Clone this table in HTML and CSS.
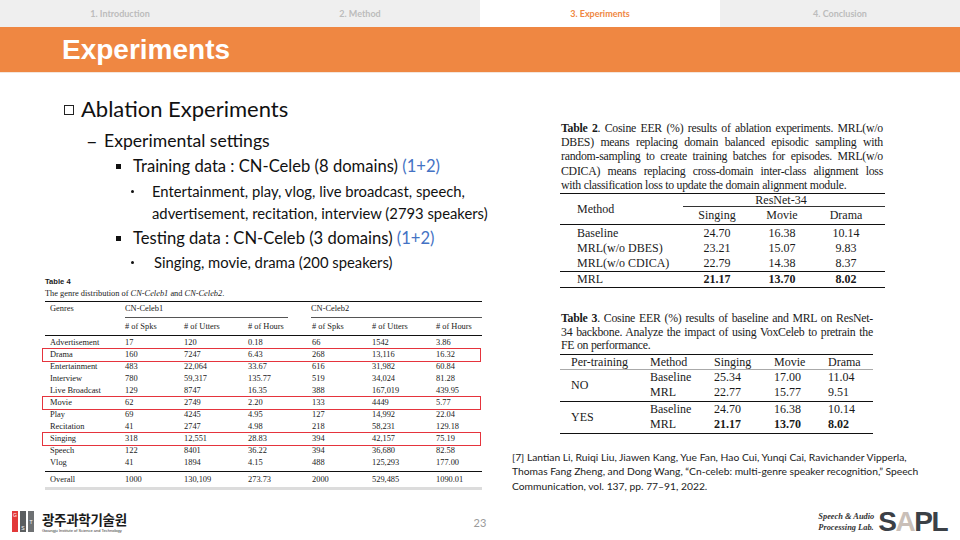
FILE: index.html
```html
<!DOCTYPE html>
<html lang="en">
<head>
<meta charset="utf-8">
<title>Experiments</title>
<link rel="stylesheet" href="styles.css">
</head>
<body>
<div class="slide">
  <nav class="tabs">
    <div class="tab">1. Introduction</div>
    <div class="tab">2. Method</div>
    <div class="tab active">3. Experiments</div>
    <div class="tab">4. Conclusion</div>
  </nav>
  <header class="titlebar"><h1>Experiments</h1></header>
  <main class="content">
    <section class="left">
      <div class="l1"><span class="box"></span>Ablation Experiments</div>
      <div class="l2"><span class="dash">–</span>Experimental settings</div>
      <div class="l3"><span class="sq"></span>Training data : CN-Celeb (8 domains) <span class="blue">&nbsp;(1+2)</span></div>
      <div class="l4"><span class="dot"></span><span>Entertainment, play, vlog, live broadcast, speech,<br>advertisement, recitation, interview (2793 speakers)</span></div>
      <div class="l5"><span class="sq"></span>Testing data : CN-Celeb (3 domains) <span class="blue">&nbsp;(1+2)</span></div>
      <div class="l6"><span class="dot"></span>Singing, movie, drama (200 speakers)</div>

      <div class="t4">
        <div class="t4-title">Table 4</div>
        <div class="t4-cap">The genre distribution of <i>CN-Celeb1</i> and <i>CN-Celeb2</i>.</div>
        <div class="t4-head1">
          <span class="g">Genres</span>
          <span class="grp grp1">CN-Celeb1</span>
          <span class="grp grp2">CN-Celeb2</span>
        </div>
        <div class="row t4-head2">
          <span></span><span># of Spks</span><span># of Utters</span><span># of Hours</span><span># of Spks</span><span># of Utters</span><span># of Hours</span>
        </div>
        <div class="t4-body">
          <div class="row"><span>Advertisement</span><span>17</span><span>120</span><span>0.18</span><span>66</span><span>1542</span><span>3.86</span></div>
          <div class="row mark"><span>Drama</span><span>160</span><span>7247</span><span>6.43</span><span>268</span><span>13,116</span><span>16.32</span></div>
          <div class="row"><span>Entertainment</span><span>483</span><span>22,064</span><span>33.67</span><span>616</span><span>31,982</span><span>60.84</span></div>
          <div class="row"><span>Interview</span><span>780</span><span>59,317</span><span>135.77</span><span>519</span><span>34,024</span><span>81.28</span></div>
          <div class="row"><span>Live Broadcast</span><span>129</span><span>8747</span><span>16.35</span><span>388</span><span>167,019</span><span>439.95</span></div>
          <div class="row mark"><span>Movie</span><span>62</span><span>2749</span><span>2.20</span><span>133</span><span>4449</span><span>5.77</span></div>
          <div class="row"><span>Play</span><span>69</span><span>4245</span><span>4.95</span><span>127</span><span>14,992</span><span>22.04</span></div>
          <div class="row"><span>Recitation</span><span>41</span><span>2747</span><span>4.98</span><span>218</span><span>58,231</span><span>129.18</span></div>
          <div class="row mark"><span>Singing</span><span>318</span><span>12,551</span><span>28.83</span><span>394</span><span>42,157</span><span>75.19</span></div>
          <div class="row"><span>Speech</span><span>122</span><span>8401</span><span>36.22</span><span>394</span><span>36,680</span><span>82.58</span></div>
          <div class="row"><span>Vlog</span><span>41</span><span>1894</span><span>4.15</span><span>488</span><span>125,293</span><span>177.00</span></div>
        </div>
        <div class="row t4-total"><span>Overall</span><span>1000</span><span>130,109</span><span>273.73</span><span>2000</span><span>529,485</span><span>1090.01</span></div>
      </div>
    </section>

    <section class="right">
      <div class="tbl2">
        <div class="cap cap2">
          <div class="jl"><b>Table 2</b>. Cosine EER (%) results of ablation experiments. MRL(w/o</div>
          <div class="jl">DBES) means replacing domain balanced episodic sampling with</div>
          <div class="jl">random-sampling to create training batches for episodes. MRL(w/o</div>
          <div class="jl">CDICA) means replacing cross-domain inter-class alignment loss</div>
          <div>with classification loss to update the domain alignment module.</div>
        </div>
        <table class="t2">
          <colgroup><col class="c1"><col class="c2"><col class="c3"><col class="c4"></colgroup>
          <tr class="h1"><td rowspan="2" class="method">Method</td><td colspan="3" class="rn">ResNet-34</td></tr>
          <tr class="h2"><td>Singing</td><td>Movie</td><td>Drama</td></tr>
          <tr class="r"><td class="name">Baseline</td><td>24.70</td><td>16.38</td><td>10.14</td></tr>
          <tr class="r"><td class="name">MRL(w/o DBES)</td><td>23.21</td><td>15.07</td><td>9.83</td></tr>
          <tr class="r"><td class="name">MRL(w/o CDICA)</td><td>22.79</td><td>14.38</td><td>8.37</td></tr>
          <tr class="r last"><td class="name">MRL</td><td><b>21.17</b></td><td><b>13.70</b></td><td><b>8.02</b></td></tr>
        </table>
      </div>

      <div class="tbl3">
        <div class="cap cap3">
          <div class="jl"><b>Table 3</b>. Cosine EER (%) results of baseline and MRL on ResNet-</div>
          <div class="jl">34 backbone. Analyze the impact of using VoxCeleb to pretrain the</div>
          <div>FE on performance.</div>
        </div>
        <table class="t3">
          <colgroup><col class="d1"><col class="d2"><col class="d3"><col class="d4"><col class="d5"></colgroup>
          <tr class="hd"><td class="pt">Per-training</td><td>Method</td><td>Singing</td><td>Movie</td><td>Drama</td></tr>
          <tr class="r"><td rowspan="2" class="pt grp3">NO</td><td>Baseline</td><td>25.34</td><td>17.00</td><td>11.04</td></tr>
          <tr class="r sep"><td>MRL</td><td>22.77</td><td>15.77</td><td>9.51</td></tr>
          <tr class="r"><td rowspan="2" class="pt">YES</td><td>Baseline</td><td>24.70</td><td>16.38</td><td>10.14</td></tr>
          <tr class="r"><td>MRL</td><td><b>21.17</b></td><td><b>13.70</b></td><td><b>8.02</b></td></tr>
        </table>
      </div>

      <p class="cite">[7] Lantian Li, Ruiqi Liu, Jiawen Kang, Yue Fan, Hao Cui, Yunqi Cai, Ravichander Vipperla,<br>Thomas Fang Zheng, and Dong Wang, “Cn-celeb: multi-genre speaker recognition,” Speech<br>Communication, vol. 137, pp. 77–91, 2022.</p>
    </section>
  </main>
  <footer class="foot">
    <div class="gist">
      <div class="bars">
        <span class="bar b1"><i class="lg">G</i></span>
        <span class="bar b2"><i class="ls">S</i></span>
        <span class="bar b3"><i class="lt">T</i></span>
      </div>
      <div class="gname">
        <div class="ko">광주과학기술원</div>
        <div class="en">Gwangju Institute of Science and Technology</div>
      </div>
    </div>
    <div class="pageno">23</div>
    <div class="sapl">
      <div class="lab"><div>Speech &amp; Audio</div><div>Processing Lab.</div></div>
      <div class="mark-sapl">S<span class="a">A</span>PL</div>
    </div>
  </footer>
</div>
</body>
</html>
```

FILE: styles.css
```css
html, body { margin: 0; padding: 0; }
body { font-family: "Lato", "Open Sans", sans-serif; color: #111; background: #fff; }
.slide { width: 960px; height: 540px; display: flex; flex-direction: column; overflow: hidden; }

.tabs { display: grid; grid-template-columns: repeat(4, 1fr); height: 27px; background: #efefef; flex: none; }
.tab { display: flex; align-items: center; justify-content: center; font: 700 9px "Lato", sans-serif; color: #bcbcbc; }
.tab.active { background: #fff; color: #ef8742; }

.titlebar { flex: none; height: 45px; background: #ef8742; border-bottom: 1px solid #f3e6dc; padding-left: 62px; display: flex; align-items: center; }
.titlebar h1 { margin: 0; font: 700 28px "Liberation Sans", Arial, sans-serif; color: #fff; }

.content { flex: none; height: 430px; display: grid; grid-template-columns: 490px 1fr; }

/* left column */
.left { display: flex; flex-direction: column; }
.l1, .l2, .l3, .l4, .l5, .l6 { display: flex; align-items: center; color: #111; }
.l1 { margin: 21px 0 0 64px; height: 28px; font-size: 22px; }
.box { width: 8px; height: 8px; border: 1px solid #222; margin-right: 7px; margin-top: 3px; }
.l2 { margin: 2px 0 0 86px; height: 32px; font-size: 17.6px; }
.dash { width: 18px; font-size: 20px; }
.l3 { margin: 0 0 0 116px; height: 20px; font-size: 16.6px; }
.l5 { margin: 3px 0 0 116px; height: 22px; font-size: 16.6px; }
.sq { width: 5px; height: 5px; background: #111; margin-right: 12px; flex: none; }
.blue { color: #4472c4; }
.l4 { margin: 4px 0 0 131px; line-height: 22px; font-size: 14.8px; align-items: flex-start; }
.l6 { margin: 2px 0 0 131px; height: 22px; font-size: 14.8px; }
.l4 .dot { margin-top: 10px; }
.dot { width: 3px; height: 3px; border-radius: 50%; background: #111; margin-right: 18px; flex: none; }
.l6 .dot { margin-right: 20px; }

/* table 4 */
.t4 { margin: 3px 0 0 45px; width: 437px; font-family: "Liberation Serif", "Times New Roman", serif; font-size: 8.4px; color: #1a1a1a; }
.t4-title { font-family: "Liberation Sans", Arial, sans-serif; font-weight: 700; font-size: 7.6px; line-height: 12px; }
.t4-cap { line-height: 12px; margin-bottom: 1px; }
.t4-head1 { border-top: 1px solid #111; display: grid; grid-template-columns: 80px 187px 1fr; height: 16px; line-height: 14px; }
.t4-head1 .g { padding-left: 5px; }
.grp { border-bottom: 1px solid #555; margin-right: 24px; }
.grp2 { margin-right: 0; margin-left: -1px; }
.row { display: grid; grid-template-columns: 80px 59px 64px 64px 60px 64px 1fr; line-height: 12px; }
.row > span:first-child { padding-left: 5px; }
.t4-head2 { height: 17px; line-height: 17px; border-bottom: 1px solid #111; }
.t4-body { padding: 1px 0 2px; border-bottom: 1.5px solid #111; }
.row.mark { outline: 1.5px solid #e5343d; outline-offset: 0.5px; margin: 0 2px 0 -2px; padding-left: 2px; }
.t4-total { line-height: 15px; border-bottom: 3px solid #dcdcdc; }

/* right column */
.right { display: flex; flex-direction: column; padding-top: 48px; }
.tbl2 { margin-left: 70px; width: 325px; }
.tbl3 { margin: 24px 0 0 70px; width: 313px; }
.cap { font-family: "Liberation Serif", "Times New Roman", serif; font-size: 11.8px; letter-spacing: -0.25px; color: #1a1a1a; width: 322px; margin-left: 1px; white-space: nowrap; }
.cap2 { line-height: 14.2px; }
.cap3 { line-height: 13.6px; width: 312px; }
.jl { text-align: justify; text-align-last: justify; white-space: normal; }

table { border-collapse: collapse; font-family: "Liberation Serif", "Times New Roman", serif; font-size: 12px; color: #1a1a1a; }
td { padding: 0; }
.t2 { width: 325px; border-top: 1px solid #111; border-bottom: 1px solid #111; margin-top: 1px; }
.t2 .c1 { width: 123px; }
.t2 .c2 { width: 68px; }
.t2 .c3 { width: 62px; }
.t2 .c4 { width: 72px; }
.t2 td { text-align: center; }
.t2 .method, .t2 .name { text-align: left; padding-left: 17px; }
.t2 .h1 td { height: 12px; line-height: 12px; }
.t2 .method { border-bottom: 1px solid #111; vertical-align: middle; padding-top: 0; }
.t2 .rn { border-bottom: 1px solid #333; }
.t2 .h2 td { height: 17px; line-height: 17px; border-bottom: 1px solid #111; }
.t2 .r td { height: 15px; line-height: 15px; }
.t2 .r:nth-child(3) td { padding-top: 1px; }
.t2 .last td { border-top: 1px solid #111; height: 15px; }
.t2 td:last-child { padding-right: 6px; }

.t3 { width: 313px; border-top: 1px solid #111; border-bottom: 1px solid #111; margin-top: 1px; }
.t3 .d1 { width: 90px; }
.t3 .d2 { width: 64px; }
.t3 .d3 { width: 60px; }
.t3 .d4 { width: 54px; }
.t3 .d5 { width: 45px; }
.t3 td { text-align: left; }
.t3 .hd td { height: 14px; line-height: 14px; border-bottom: 1px solid #aaa; }
.t3 .pt { padding-left: 11px; vertical-align: middle; }
.t3 .r td { height: 15.5px; line-height: 15.5px; }
.t3 .sep td, .t3 .grp3 { border-bottom: 1px solid #111; }

.cite { margin: 16px 0 0 22px; font: 10.3px/14.5px "Lato", "Open Sans", sans-serif; color: #222; white-space: nowrap; }

/* footer */
.foot { flex: none; height: 37px; display: grid; grid-template-columns: 1fr auto 1fr; align-items: center; }
.gist { display: flex; align-items: center; padding-left: 12px; }
.bars { display: flex; gap: 2px; height: 21px; margin-right: 8px; }
.bar { width: 6px; height: 21px; position: relative; }
.b1 { background: #e2393a; }
.b2 { background: #5b5e60; }
.b3 { background: #6e7173; }
.bar i { position: absolute; left: 0; width: 6px; text-align: center; font: normal 5px "Liberation Sans", sans-serif; color: #fff; }
.lg { top: 1px; }
.ls { bottom: 1px; }
.lt { top: 8px; }
.gname { display: flex; flex-direction: column; padding-top: 1px; }
.ko { font: 700 13.5px/15px "Noto Sans CJK KR", sans-serif; color: #1a1a1a; letter-spacing: -0.3px; }
.en { font: 4px/5px "Liberation Sans", sans-serif; color: #333; white-space: nowrap; margin-top: 1px; }
.pageno { font: 11px "Lato", sans-serif; color: #9a9a9a; padding-top: 2px; }
.sapl { display: flex; align-items: center; justify-content: flex-end; padding-right: 13px; }
.lab { font: italic 700 8.4px/11px "Liberation Serif", serif; color: #333; margin-right: 4px; }
.mark-sapl { font: 700 28px/30px "Liberation Sans Narrow", "Liberation Sans", Arial, sans-serif; color: #3b4046; letter-spacing: -1.5px; }
.mark-sapl .a { color: #c9bfb8; }
```
